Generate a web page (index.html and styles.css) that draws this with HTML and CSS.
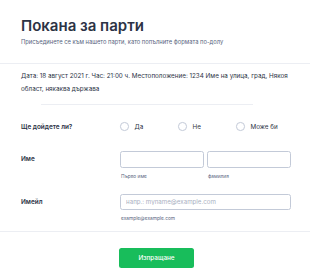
FILE: index.html
```html
<!DOCTYPE html>
<html lang="bg">
  <head>
    <meta charset="UTF-8" />
    <meta name="viewport" content="width=device-width, initial-scale=1.0" />
    <title>Покана за парти</title>
    <link rel="stylesheet" href="styles.css">
  </head>
  <body>
    <form class="form">
      <header class="form-header">
        <h1>Покана за парти</h1>
        <p>Присъединете се към нашето парти, като попълните формата по-долу</p>
      </header>

      <section class="details">
        <p>Дата: 18 август 2021 г. Час: 21:00 ч. Местоположение: 1234 Име на улица, град, Някоя област, някаква държава</p>
        <div class="short-line"></div>
      </section>

      <div class="field field-radio">
        <label class="field-label">Ще дойдете ли?</label>
        <div class="radios">
          <label class="radio"><span class="dot"></span>Да</label>
          <label class="radio"><span class="dot"></span>Не</label>
          <label class="radio"><span class="dot"></span>Може би</label>
        </div>
      </div>

      <div class="field field-name">
        <label class="field-label">Име</label>
        <div class="name-inputs">
          <div class="sub">
            <input type="text" />
            <span class="hint">Първо име</span>
          </div>
          <div class="sub">
            <input type="text" />
            <span class="hint">фамилия</span>
          </div>
        </div>
      </div>

      <div class="field field-email">
        <label class="field-label">Имейл</label>
        <div class="sub">
          <input type="email" placeholder="напр.: myname@example.com" />
          <span class="hint">example@example.com</span>
        </div>
      </div>

      <div class="actions">
        <button type="button">Изпращане</button>
      </div>
    </form>
  </body>
</html>
```

FILE: styles.css
```css
body {
  margin: 0;
  background: #fff;
  font-family: 'Inter', 'Noto Sans', sans-serif;
  color: #2c3345;
}

.form {
  width: 310px;
}

.form-header {
  padding: 17px 21px 16px;
  border-bottom: 1px solid #eceef3;
}

.form-header h1 {
  margin: 0;
  font-size: 15px;
  line-height: 18px;
  font-weight: 600;
}

.form-header p {
  margin: 1.5px 0 0;
  font-size: 5.8px;
  line-height: 10px;
  color: #57647e;
}

.details {
  padding: 6.5px 19px 0 21px;
}

.details p {
  margin: 0;
  font-size: 6.3px;
  line-height: 12.6px;
}

.short-line {
  margin: 9px 38px 0 20px;
  border-top: 1px solid #eceef3;
}

.field {
  display: grid;
  grid-template-columns: 99px 1fr;
  padding: 0 19px 0 21px;
  align-items: start;
}

.field-label {
  font-size: 6.4px;
  font-weight: 600;
  line-height: 16px;
}

.field-radio {
  margin-top: 13.5px;
}

.radios {
  display: flex;
}

.radio {
  display: flex;
  align-items: center;
  height: 16px;
  font-size: 6.3px;
  width: 58px;
}

.dot {
  width: 6.5px;
  height: 6.5px;
  border: 0.7px solid #c3cad8;
  border-radius: 50%;
  margin-right: 6px;
}

.field-name {
  margin-top: 16.5px;
}

.name-inputs {
  display: grid;
  grid-template-columns: 84px 84px;
  gap: 3px;
}

.sub {
  display: flex;
  flex-direction: column;
}

input {
  box-sizing: border-box;
  height: 16.5px;
  width: 100%;
  margin: 0;
  border: 0.7px solid #c3cad8;
  border-radius: 2.5px;
  padding: 0 5px;
  font-family: inherit;
  font-size: 6.2px;
  color: #2c3345;
}

input::placeholder {
  color: #a9b0bf;
}

.hint {
  margin-top: 4px;
  font-size: 4.8px;
  line-height: 8px;
  color: #57647e;
  padding-left: 1px;
}

.field-email {
  margin-top: 14px;
}

.actions {
  margin-top: 9px;
  border-top: 1px solid #eceef3;
  padding: 12px 0 0 119px;
}

.actions button {
  width: 75px;
  height: 20px;
  border: none;
  border-radius: 2.5px;
  background: #18bd5b;
  color: #fff;
  font-family: inherit;
  font-size: 6.4px;
  font-weight: 500;
  cursor: pointer;
}
```
